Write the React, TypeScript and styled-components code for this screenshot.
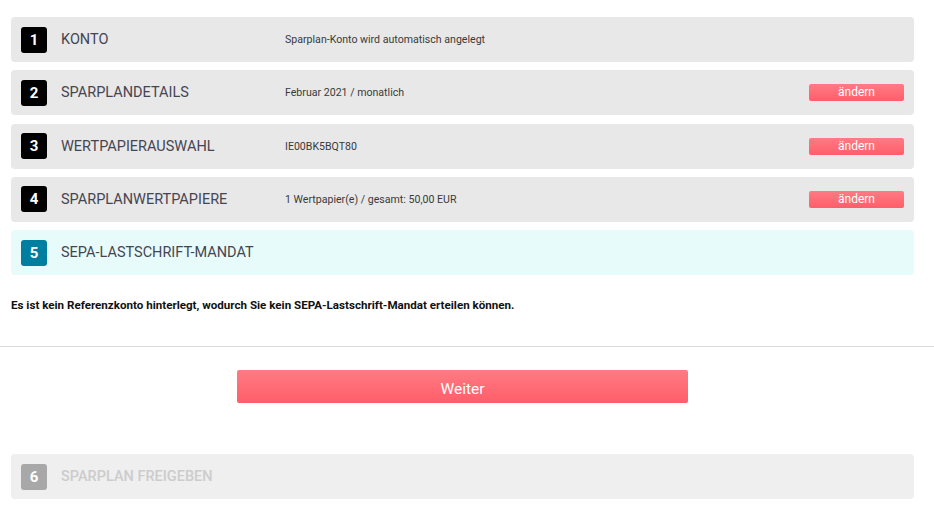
import React from "react";
import styled, { createGlobalStyle } from "styled-components";

const Global = createGlobalStyle`
  html, body { margin: 0; padding: 0; background: #fff; }
  body { font-family: Roboto, "Liberation Sans", sans-serif; color: #333; }
`;

const Page = styled.div`
  padding-top: 17px;
`;

const Inner = styled.div`
  padding: 0 20px 0 11px;
  display: flex;
  flex-direction: column;
  gap: 8.3px;
`;

type Variant = "done" | "active" | "disabled";

const Card = styled.div<{ $v: Variant }>`
  height: 45px;
  border-radius: 4px;
  display: flex;
  align-items: center;
  padding: 0 10px;
  background: ${(p) => (p.$v === "active" ? "#e8fbfb" : p.$v === "disabled" ? "#efefef" : "#e8e8e8")};
`;

const Badge = styled.div<{ $v: Variant }>`
  width: 26px;
  height: 26px;
  border-radius: 3px;
  flex: none;
  display: flex;
  align-items: center;
  justify-content: center;
  color: #fff;
  font-weight: 700;
  font-size: 15px;
  background: ${(p) => (p.$v === "active" ? "#007ea0" : p.$v === "disabled" ? "#a8a8a8" : "#000")};
`;

const Title = styled.div<{ $v: Variant }>`
  width: 224px;
  margin-left: 14px;
  font-size: 14.5px;
  flex: none;
  color: ${(p) => (p.$v === "disabled" ? "#cccccc" : "#454552")};
  font-weight: ${(p) => (p.$v === "disabled" ? 500 : 400)};
`;

const Detail = styled.div`
  flex: 1;
  font-size: 10.6px;
  color: #3a3a3a;
`;

const SmallButton = styled.button`
  width: 95px;
  height: 17px;
  border: 0;
  border-radius: 2px;
  background: linear-gradient(#ff7b84, #ff5e69);
  color: #fff;
  font-family: inherit;
  font-size: 12px;
  padding: 0;
  line-height: 17px;
`;

const Notice = styled.p`
  margin: 23px 0 0 11px;
  font-size: 11.6px;
  font-weight: 700;
  color: #111;
`;

const Divider = styled.hr`
  margin: 34px 0 0;
  border: 0;
  border-top: 1px solid #d9d9d9;
`;

const ButtonRow = styled.div`
  display: flex;
  justify-content: center;
  padding: 23px 9px 0 0;
`;

const BigButton = styled.button`
  width: 451px;
  height: 33px;
  border: 0;
  border-radius: 2px;
  background: linear-gradient(#ff7b84, #ff5e69);
  color: #fff;
  font-family: inherit;
  font-size: 15.5px;
  font-weight: 400;
  padding: 4px 0 0;
`;

const Footer = styled.div`
  padding: 51px 20px 0 11px;
`;

const steps: { n: number; title: string; detail?: string; edit?: boolean; v: Variant }[] = [
  { n: 1, title: "KONTO", detail: "Sparplan-Konto wird automatisch angelegt", v: "done" },
  { n: 2, title: "SPARPLANDETAILS", detail: "Februar 2021 / monatlich", edit: true, v: "done" },
  { n: 3, title: "WERTPAPIERAUSWAHL", detail: "IE00BK5BQT80", edit: true, v: "done" },
  { n: 4, title: "SPARPLANWERTPAPIERE", detail: "1 Wertpapier(e) / gesamt: 50,00 EUR", edit: true, v: "done" },
  { n: 5, title: "SEPA-LASTSCHRIFT-MANDAT", v: "active" },
];

export default function App() {
  return (
    <Page>
      <Global />
      <Inner>
        {steps.map((s) => (
          <Card key={s.n} $v={s.v}>
            <Badge $v={s.v}>{s.n}</Badge>
            <Title $v={s.v}>{s.title}</Title>
            <Detail>{s.detail}</Detail>
            {s.edit && <SmallButton>ändern</SmallButton>}
          </Card>
        ))}
      </Inner>
      <Notice>Es ist kein Referenzkonto hinterlegt, wodurch Sie kein SEPA-Lastschrift-Mandat erteilen können.</Notice>
      <Divider />
      <ButtonRow>
        <BigButton>Weiter</BigButton>
      </ButtonRow>
      <Footer>
        <Card $v="disabled">
          <Badge $v="disabled">6</Badge>
          <Title $v="disabled">SPARPLAN FREIGEBEN</Title>
        </Card>
      </Footer>
    </Page>
  );
}
